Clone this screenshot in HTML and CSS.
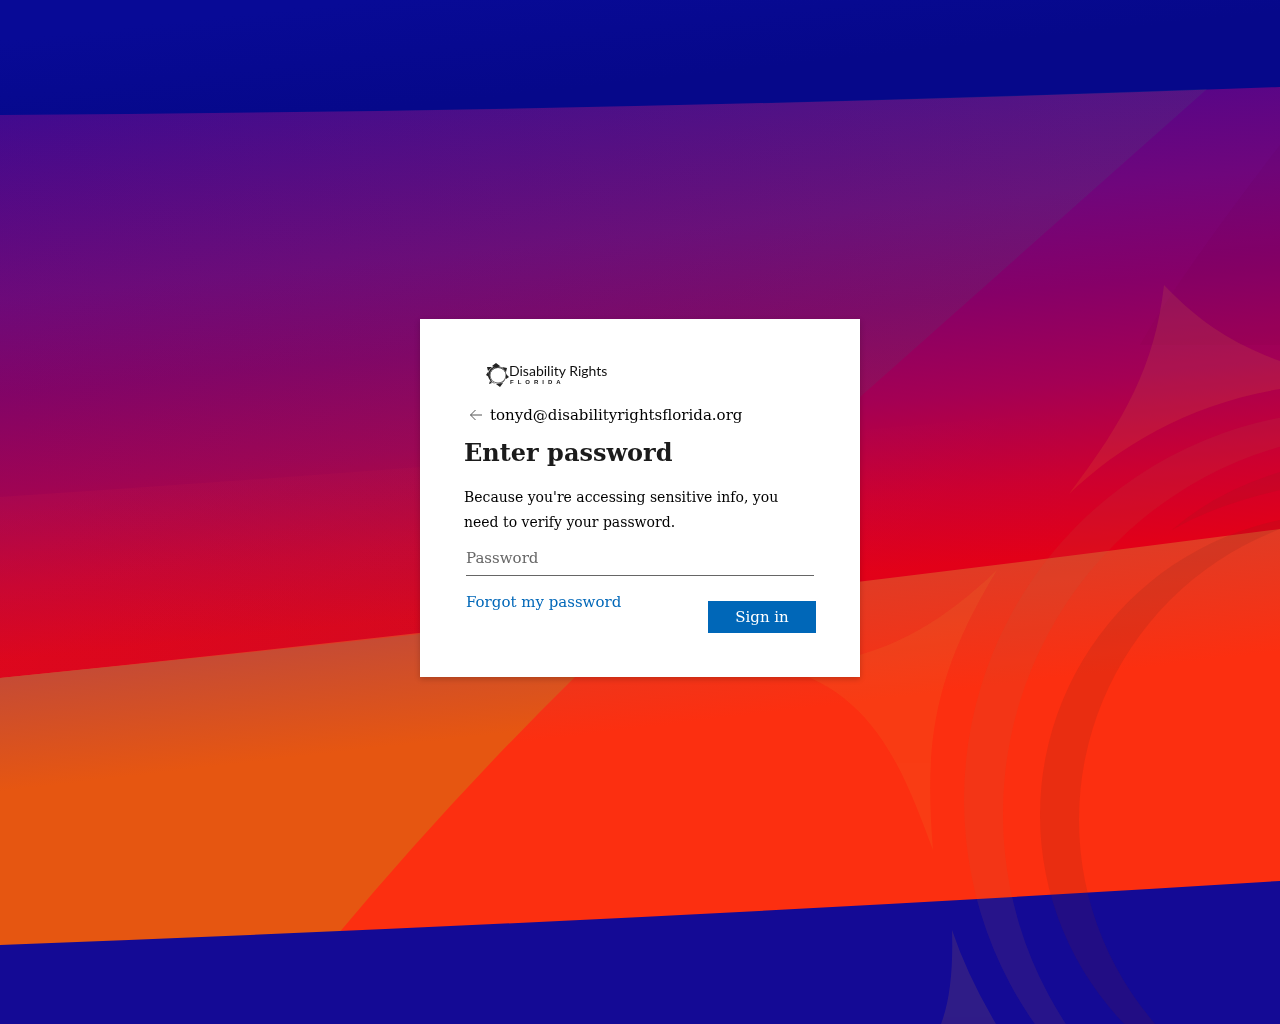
FILE: index.html
```
<!DOCTYPE html>
<html lang="en">
<head>
    <meta charset="UTF-8">
    <meta name="viewport" content="width=device-width, initial-scale=1.0">
    <title>Sign in to your account</title>
    <link rel="stylesheet" href="styles.css">
</head>
<body>
    <svg class="background" viewBox="0 0 1280 1024" preserveAspectRatio="xMidYMid slice" aria-hidden="true">
        <defs>
            <linearGradient id="sky" x1="0" y1="40" x2="12" y2="150" gradientUnits="userSpaceOnUse">
                <stop offset="0" stop-color="#080a96"/>
                <stop offset="1" stop-color="#06088a"/>
            </linearGradient>
            <linearGradient id="dusk" x1="0" y1="95" x2="57" y2="655" gradientUnits="userSpaceOnUse">
                <stop offset="0" stop-color="#3c0595"/>
                <stop offset="0.36" stop-color="#6f067c"/>
                <stop offset="0.53" stop-color="#860068"/>
                <stop offset="0.7" stop-color="#a40054"/>
                <stop offset="0.87" stop-color="#cc0030"/>
                <stop offset="1" stop-color="#e20018"/>
            </linearGradient>
            <linearGradient id="sunset" x1="0" y1="678" x2="15" y2="803" gradientUnits="userSpaceOnUse">
                <stop offset="0" stop-color="#df3c26"/>
                <stop offset="1" stop-color="#fc2f10"/>
            </linearGradient>
            <linearGradient id="sand" x1="0" y1="678" x2="13" y2="790" gradientUnits="userSpaceOnUse">
                <stop offset="0" stop-color="#c54b35"/>
                <stop offset="1" stop-color="#e65611"/>
            </linearGradient>
            <linearGradient id="haze" x1="100" y1="600" x2="1100" y2="150" gradientUnits="userSpaceOnUse">
                <stop offset="0" stop-color="#405050" stop-opacity="0.05"/>
                <stop offset="1" stop-color="#405878" stop-opacity="0.18"/>
            </linearGradient>
            <linearGradient id="glow" x1="0" y1="0" x2="1100" y2="0" gradientUnits="userSpaceOnUse">
                <stop offset="0" stop-color="#ff3040" stop-opacity="0.07"/>
                <stop offset="1" stop-color="#ff3040" stop-opacity="0"/>
            </linearGradient>
        </defs>

        <!-- bands -->
        <rect width="1280" height="1024" fill="url(#sky)"/>
        <path fill="url(#dusk)" d="M0 115Q640 111 1280 87V540L0 690Z"/>
        <path fill="url(#haze)" d="M0 115Q620 111 1207 89Q1040 237 860 397L575 677L0 690Z"/>
        <path fill="url(#glow)" d="M0 497Q550 461 1100 408V560L0 690Z"/>
        <path fill="url(#sunset)" d="M0 678Q640 612 1280 529V900L0 960Z"/>
        <path fill="url(#sand)" d="M0 678Q310 647 620 612L575 677Q450 800 338 934L0 960Z"/>
        <path fill="#600010" opacity="0.04" d="M1280 145Q1180 275 1140 345L1280 345Z"/>
        <path fill="#140a95" d="M0 945Q640 921 1280 881V1024H0Z"/>

        <!-- sun rings -->
        <path fill="#b1643f" fill-rule="evenodd" opacity="0.12" d="M964 800a389 389 0 1 0 778 0a389 389 0 1 0 -778 0ZM1003 814a382 382 0 1 0 764 0a382 382 0 1 0 -764 0Z"/>
        <path fill="#78231e" fill-rule="evenodd" opacity="0.14" d="M1040 815a301 301 0 1 0 602 0a301 301 0 1 0 -602 0ZM1079 820a311 311 0 1 0 622 0a311 311 0 1 0 -622 0Z"/>
        <path fill="#78231e" opacity="0.12" d="M1172 530Q1215 492 1280 472V490Q1215 505 1172 530Z"/>

        <!-- sun rays -->
        <g fill="#e69632" opacity="0.13">
            <path d="M1164 285C1205 328 1240 346 1280 361V389C1190 404 1120 445 1069 494C1125 420 1155 365 1164 285Z"/>
            <path d="M997 570C945 620 895 650 830 662L780 668C875 690 905 775 933 850C925 750 930 680 997 570Z"/>
            <path d="M952 930Q967 975 996 1024H941Q954 990 952 930Z"/>
        </g>
    </svg>

    <main class="page">
        <form class="card">
            <svg class="logo" viewBox="0 0 144 24" role="img" aria-label="Disability Rights Florida">
                <path fill="#222" fill-rule="evenodd" d="M24 12a9 9 0 1 0 18 0a9 9 0 1 0 -18 0ZM26 13a8 8 0 1 0 16 0a8 8 0 1 0 -16 0Z"/>
                <circle cx="34" cy="12" r="8" fill="none" stroke="#777" stroke-width="1"/>
                <path fill="#222" d="M28 3L32 0L36 3L32 5ZM38 4L43 5L42 9ZM42 11L45 14L42 16ZM39 20L36 24L32 21ZM28 20L25 21L26 18ZM24 9L22 12L25 14ZM28 4L23 4L24 8Z"/>
                <text class="logo-name" x="45" y="13">Disability Rights</text>
                <text class="logo-state" x="46" y="21">FLORIDA</text>
            </svg>

            <div class="identity">
                <button class="back" type="button" aria-label="Back">
                    <svg viewBox="0 0 24 24">
                        <path d="M18 12H6.500M11.500 7L6.500 12L11.500 17"/>
                    </svg>
                </button>
                <span>tonyd@disabilityrightsflorida.org</span>
            </div>

            <h1>Enter password</h1>
            <p class="description">Because you're accessing sensitive info, you need to verify your password.</p>

            <input class="password" type="password" placeholder="Password" aria-label="Password">

            <div class="actions">
                <a href="#">Forgot my password</a>
                <button class="submit" type="submit">Sign in</button>
            </div>
        </form>
    </main>
</body>
</html>
```
FILE: styles.css
```
* {
    margin: 0;
    padding: 0;
    box-sizing: border-box;
}

body {
    font-family: "DejaVu Serif", serif;
    font-size: 15px;
    line-height: 20px;
    color: #000;
    background: #140a95;
}

.background {
    position: fixed;
    top: 0;
    left: 0;
    width: 100%;
    height: 100%;
    z-index: -1;
}

.page {
    min-height: 100vh;
    display: flex;
    align-items: center;
    justify-content: center;
    padding-bottom: 28px;
}

.card {
    width: 100%;
    max-width: 440px;
    padding: 44px;
    background: #fff;
    box-shadow: 0 2px 6px rgba(0, 0, 0, 0.2);
}

.logo {
    display: block;
    width: 144px;
    height: 24px;
}

.logo-name {
    font-family: Lato, sans-serif;
    font-size: 14px;
    fill: #111;
}

.logo-state {
    font-family: "Liberation Sans", sans-serif;
    font-size: 6px;
    font-weight: bold;
    letter-spacing: 4px;
    fill: #111;
}

.identity {
    display: flex;
    align-items: center;
    gap: 2px;
    margin-top: 16px;
    height: 24px;
}

.back {
    width: 24px;
    height: 24px;
    border: none;
    background: none;
    cursor: pointer;
}

.back svg {
    display: block;
    fill: none;
    stroke: #555;
    stroke-width: 1;
}

h1 {
    margin-top: 10px;
    font-size: 24px;
    line-height: 32px;
    color: #1b1b1b;
}

.description {
    margin-top: 16px;
    font-size: 14px;
    line-height: 25px;
}

.password {
    display: block;
    width: calc(100% - 4px);
    height: 35px;
    margin: 6px 2px 0;
    border: none;
    border-bottom: 1px solid #666;
    font: inherit;
    outline: none;
}

.password::placeholder {
    color: #666;
}

.actions {
    display: flex;
    justify-content: space-between;
    align-items: flex-start;
    margin-top: 16px;
    padding-left: 2px;
}

.actions a {
    color: #0067b8;
    text-decoration: none;
}

.actions a:hover {
    text-decoration: underline;
}

.submit {
    width: 108px;
    height: 32px;
    margin-top: 9px;
    border: none;
    background: #0067b8;
    color: #fff;
    font: inherit;
    cursor: pointer;
}

.submit:hover {
    background: #005da6;
}
```
